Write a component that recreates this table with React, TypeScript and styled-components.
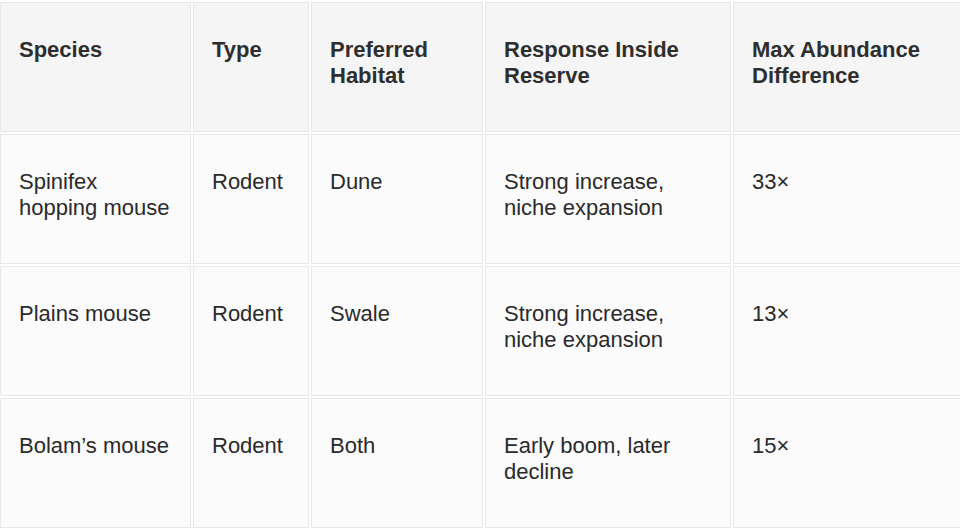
import React from 'react';
import styled, { createGlobalStyle } from 'styled-components';

const GlobalStyle = createGlobalStyle`
  html, body {
    margin: 0;
    padding: 0;
    background-color: #ffffff;
    overflow: hidden;
  }
  body {
    font-family: "Liberation Sans", Arial, sans-serif;
  }
`;

const Wrapper = styled.div`
  width: 960px;
  height: 530px;
  overflow: hidden;
`;

const Table = styled.table<{ $w: number }>`
  border-collapse: separate;
  border-spacing: 2px;
  table-layout: fixed;
  width: ${(p) => p.$w}px;
  margin: 0 0 0 -2px;
`;

const HeadCell = styled.th<{ $w: number }>`
  width: ${(p) => p.$w}px;
  box-sizing: border-box;
  height: 130px;
  padding: 34px 18px 0 18px;
  vertical-align: top;
  text-align: left;
  background-color: #f5f5f5;
  border: 1px solid #e6e6e6;
  color: #2e2e2e;
  font-size: 22px;
  line-height: 26px;
  font-weight: 700;
`;

const Cell = styled.td`
  box-sizing: border-box;
  height: 130px;
  padding: 34px 18px 0 18px;
  vertical-align: top;
  background-color: #fbfbfb;
  border: 1px solid #e8e8e8;
  color: #2a2a2a;
  font-size: 22px;
  line-height: 26px;
`;

const columns = [
  { title: 'Species', w: 191 },
  { title: 'Type', w: 116 },
  { title: 'Preferred Habitat', w: 172 },
  { title: 'Response Inside Reserve', w: 246 },
  { title: 'Max Abundance Difference', w: 300 },
];

const rows = [
  ['Spinifex hopping mouse', 'Rodent', 'Dune', 'Strong increase, niche expansion', '33×'],
  ['Plains mouse', 'Rodent', 'Swale', 'Strong increase, niche expansion', '13×'],
  ['Bolam’s mouse', 'Rodent', 'Both', 'Early boom, later decline', '15×'],
];

const tableWidth = columns.reduce((sum, c) => sum + c.w, 0) + (columns.length + 1) * 2;

const App = () => {
  return (
    <Wrapper>
      <GlobalStyle />
      <Table $w={tableWidth}>
        <thead>
          <tr>
            {columns.map((c) => (
              <HeadCell key={c.title} $w={c.w}>
                {c.title}
              </HeadCell>
            ))}
          </tr>
        </thead>
        <tbody>
          {rows.map((r) => (
            <tr key={r[0]}>
              {r.map((v, i) => (
                <Cell key={i}>{v}</Cell>
              ))}
            </tr>
          ))}
        </tbody>
      </Table>
    </Wrapper>
  );
};

export default App;
